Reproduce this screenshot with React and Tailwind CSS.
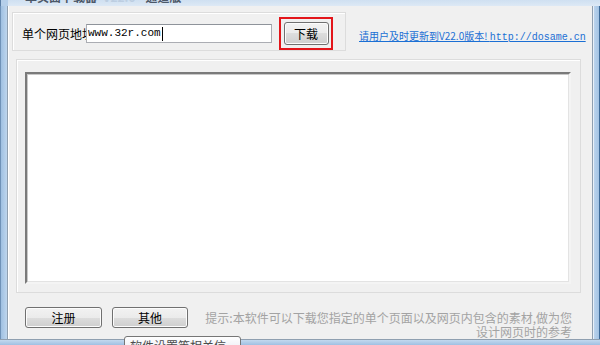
export default function App() {
  const cjk = { fontFamily: '"Noto Sans CJK SC", "Liberation Sans", sans-serif' };
  const btn =
    "flex items-center justify-center rounded-[3px] border border-[#707070] bg-[linear-gradient(to_bottom,#f2f2f2_0%,#ebebeb_50%,#dddddd_50%,#cfcfcf_100%)] text-[12px] text-black shadow-[inset_0_0_0_1px_#fcfcfc]";
  return (
    <div className="relative flex h-[345px] w-[600px] flex-col overflow-hidden bg-[#a9c7e6]" style={cjk}>
      {/* title strip (mostly cut off) */}
      <div className="flex h-[6px] overflow-hidden bg-[linear-gradient(to_bottom,#cfe0f1,#dde9f5)]">
        <div className="w-[8px] shrink-0 border-l border-[#5a7ea6] bg-[#b5cfea]" />
        <div className="relative flex flex-1 pl-[17px] text-[12px] font-bold leading-none text-[#1e2a3a]">
          <span className="-mt-[9px] opacity-75">单页面下载器</span>
          <span className="-mt-[9px] ml-[6px] text-[#b8cade] opacity-80">V22.0</span>
          <span className="-mt-[9px] ml-[10px] opacity-75">通道版</span>
        </div>
      </div>
      {/* middle */}
      <div className="flex flex-1">
        <div className="w-[8px] shrink-0 border-l border-[#6f92b8] bg-[linear-gradient(to_right,#9fc0e2,#c3d9ef)] pr-0">
          <div className="ml-[6px] h-full w-[1px] bg-[#8f9fb0]" />
        </div>
        <div className="flex flex-1 flex-col border-l border-white bg-[#f0f0f0] px-[3px] pt-[6px]">
          {/* top row */}
          <div className="flex items-start">
            <div className="flex h-[39px] w-[334px] items-start border border-[#dcdcdc] pt-[11px] shadow-[inset_1px_1px_0_#ffffff]">
              <span className="ml-[9px] w-[64px] shrink-0 overflow-hidden whitespace-nowrap text-[12px] leading-[20px] text-black">单个网页地址</span>
              <div className="flex h-[19px] w-[186px] items-center border border-[#abadb3] border-t-[#8e939a] bg-white pl-[1px]">
                <span className="text-[11px] leading-none text-black" style={{ fontFamily: '"Liberation Mono", monospace' }}>www.32r.com</span>
                <span className="ml-[1px] h-[14px] w-[1px] bg-black" />
              </div>
              <div className="-mt-[7px] ml-[7px] flex h-[33px] w-[54px] items-center justify-center border-2 border-[#e3151a]">
                <div className={btn + " h-[23px] w-[45px]"}>下载</div>
              </div>
            </div>
            <a className="ml-[13px] mt-[19px] whitespace-nowrap text-[10px] leading-none text-[#1b6fd4] underline">
              请用户及时更新到V22.0版本! <span style={{ fontFamily: '"Liberation Mono", monospace' }}>http://dosame.cn</span>
            </a>
          </div>
          {/* group 2 */}
          <div className="ml-[4px] mt-[8px] flex h-[234px] w-[565px] border border-[#dcdcdc] pb-[8px] pl-[8px] pr-[9px] pt-[12px] shadow-[inset_1px_1px_0_#ffffff]">
            <div className="flex-1 border-2 border-b-[#f4f4f4] border-l-[#7a7a7a] border-r-[#f4f4f4] border-t-[#7a7a7a] bg-white shadow-[inset_1px_1px_0_#c8c8c8,inset_-1px_-1px_0_#e3e3e3]" />
          </div>
          {/* bottom row */}
          <div className="mt-[14px] flex items-start">
            <div className={btn + " ml-[13px] h-[21px] w-[77px]"}>注册</div>
            <div className={btn + " ml-[10px] h-[21px] w-[76px]"}>其他</div>
            <div className="ml-[17px] mt-[4px] flex w-[367px] flex-col items-end text-[12px] leading-[14px] text-[#a3a3a3]">
              <span className="whitespace-nowrap">提示:本软件可以下载您指定的单个页面以及网页内包含的素材,做为您</span>
              <span className="whitespace-nowrap">设计网页时的参考</span>
            </div>
          </div>
        </div>
        <div className="flex w-[8px] shrink-0 bg-[linear-gradient(to_right,#c3d9ef,#9fc0e2)]">
          <div className="h-full w-[1px] bg-[#8f9fb0]" />
          <div className="h-full w-[1px] bg-[#e8f0f8]" />
          <div className="flex-1" />
          <div className="h-full w-[1px] bg-[#3d6a98]" />
        </div>
      </div>
      {/* bottom frame */}
      <div className="h-[6px] shrink-0 border-t border-[#8f9fb0] bg-[linear-gradient(to_bottom,#c3d9ef,#9fc0e2)]" />
      {/* tooltip */}
      <div className="absolute left-[124px] top-[336px] h-[20px] w-[117px] rounded-[3px] border border-[#767676] bg-[linear-gradient(to_bottom,#ffffff,#e4e5f0)] px-[5px] text-[12px] leading-[18px] text-[#4c4c4c]">
        软件设置等相关信息
      </div>
    </div>
  );
}
